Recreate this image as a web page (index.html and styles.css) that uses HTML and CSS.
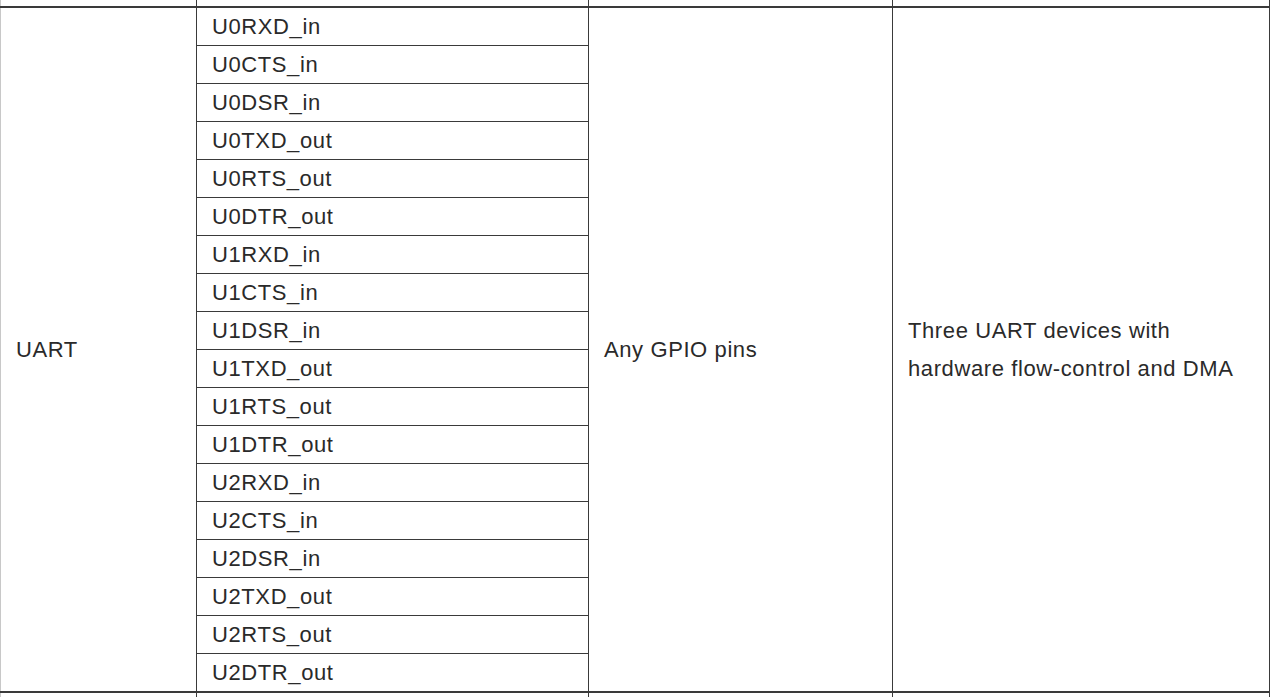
FILE: index.html
```html
<!DOCTYPE html>
<html>
<head>
<meta charset="utf-8">
<link rel="stylesheet" href="styles.css">
</head>
<body>
<div class="page">
<table class="pins">
  <colgroup>
    <col class="c1"><col class="c2"><col class="c3"><col class="c4">
  </colgroup>
  <tr class="prev"><td></td><td></td><td></td><td></td></tr>
  <tr>
    <td class="group" rowspan="18">UART</td>
    <td class="sig">U0RXD_in</td>
    <td class="group" rowspan="18">Any GPIO pins</td>
    <td class="group desc" rowspan="18">Three UART devices with<br>hardware flow-control and DMA</td>
  </tr>
  <tr><td class="sig">U0CTS_in</td></tr>
  <tr><td class="sig">U0DSR_in</td></tr>
  <tr><td class="sig">U0TXD_out</td></tr>
  <tr><td class="sig">U0RTS_out</td></tr>
  <tr><td class="sig">U0DTR_out</td></tr>
  <tr><td class="sig">U1RXD_in</td></tr>
  <tr><td class="sig">U1CTS_in</td></tr>
  <tr><td class="sig">U1DSR_in</td></tr>
  <tr><td class="sig">U1TXD_out</td></tr>
  <tr><td class="sig">U1RTS_out</td></tr>
  <tr><td class="sig">U1DTR_out</td></tr>
  <tr><td class="sig">U2RXD_in</td></tr>
  <tr><td class="sig">U2CTS_in</td></tr>
  <tr><td class="sig">U2DSR_in</td></tr>
  <tr><td class="sig">U2TXD_out</td></tr>
  <tr><td class="sig">U2RTS_out</td></tr>
  <tr><td class="sig">U2DTR_out</td></tr>
  <tr class="next"><td></td><td></td><td></td><td></td></tr>
</table>
</div>
</body>
</html>
```

FILE: styles.css
```css
html, body {
  margin: 0;
  padding: 0;
  background: #ffffff;
}

.page {
  height: 697px;
  overflow: hidden;
  font-family: "Liberation Sans", Arial, sans-serif;
  color: #2a2a2a;
}

.pins {
  border-collapse: collapse;
  table-layout: fixed;
  width: 1270px;
  margin-top: -1px;
  border-left: 1px solid #c8c8c8;
}

.c1 { width: 196px; }
.c2 { width: 392px; }
.c3 { width: 304px; }
.c4 { width: 377px; }

.pins td {
  border: 1px solid #3a3a3a;
  padding: 0 0 0 15px;
  font-size: 22px;
  letter-spacing: 0.6px;
  line-height: 37px;
  vertical-align: middle;
  white-space: nowrap;
}

.pins td:first-child {
  border-left-color: #c8c8c8;
}

.pins tr.prev td {
  height: 6px;
  padding: 0;
  line-height: 0;
  border-bottom-width: 2px;
}

.pins td.sig {
  height: 37px;
  padding-left: 15px;
}

.pins td.group {
  padding-left: 15px;
}

.pins td.desc {
  line-height: 38px;
}

.pins tr.next td {
  height: 20px;
  padding: 0;
  border-top-width: 2px;
}
```
